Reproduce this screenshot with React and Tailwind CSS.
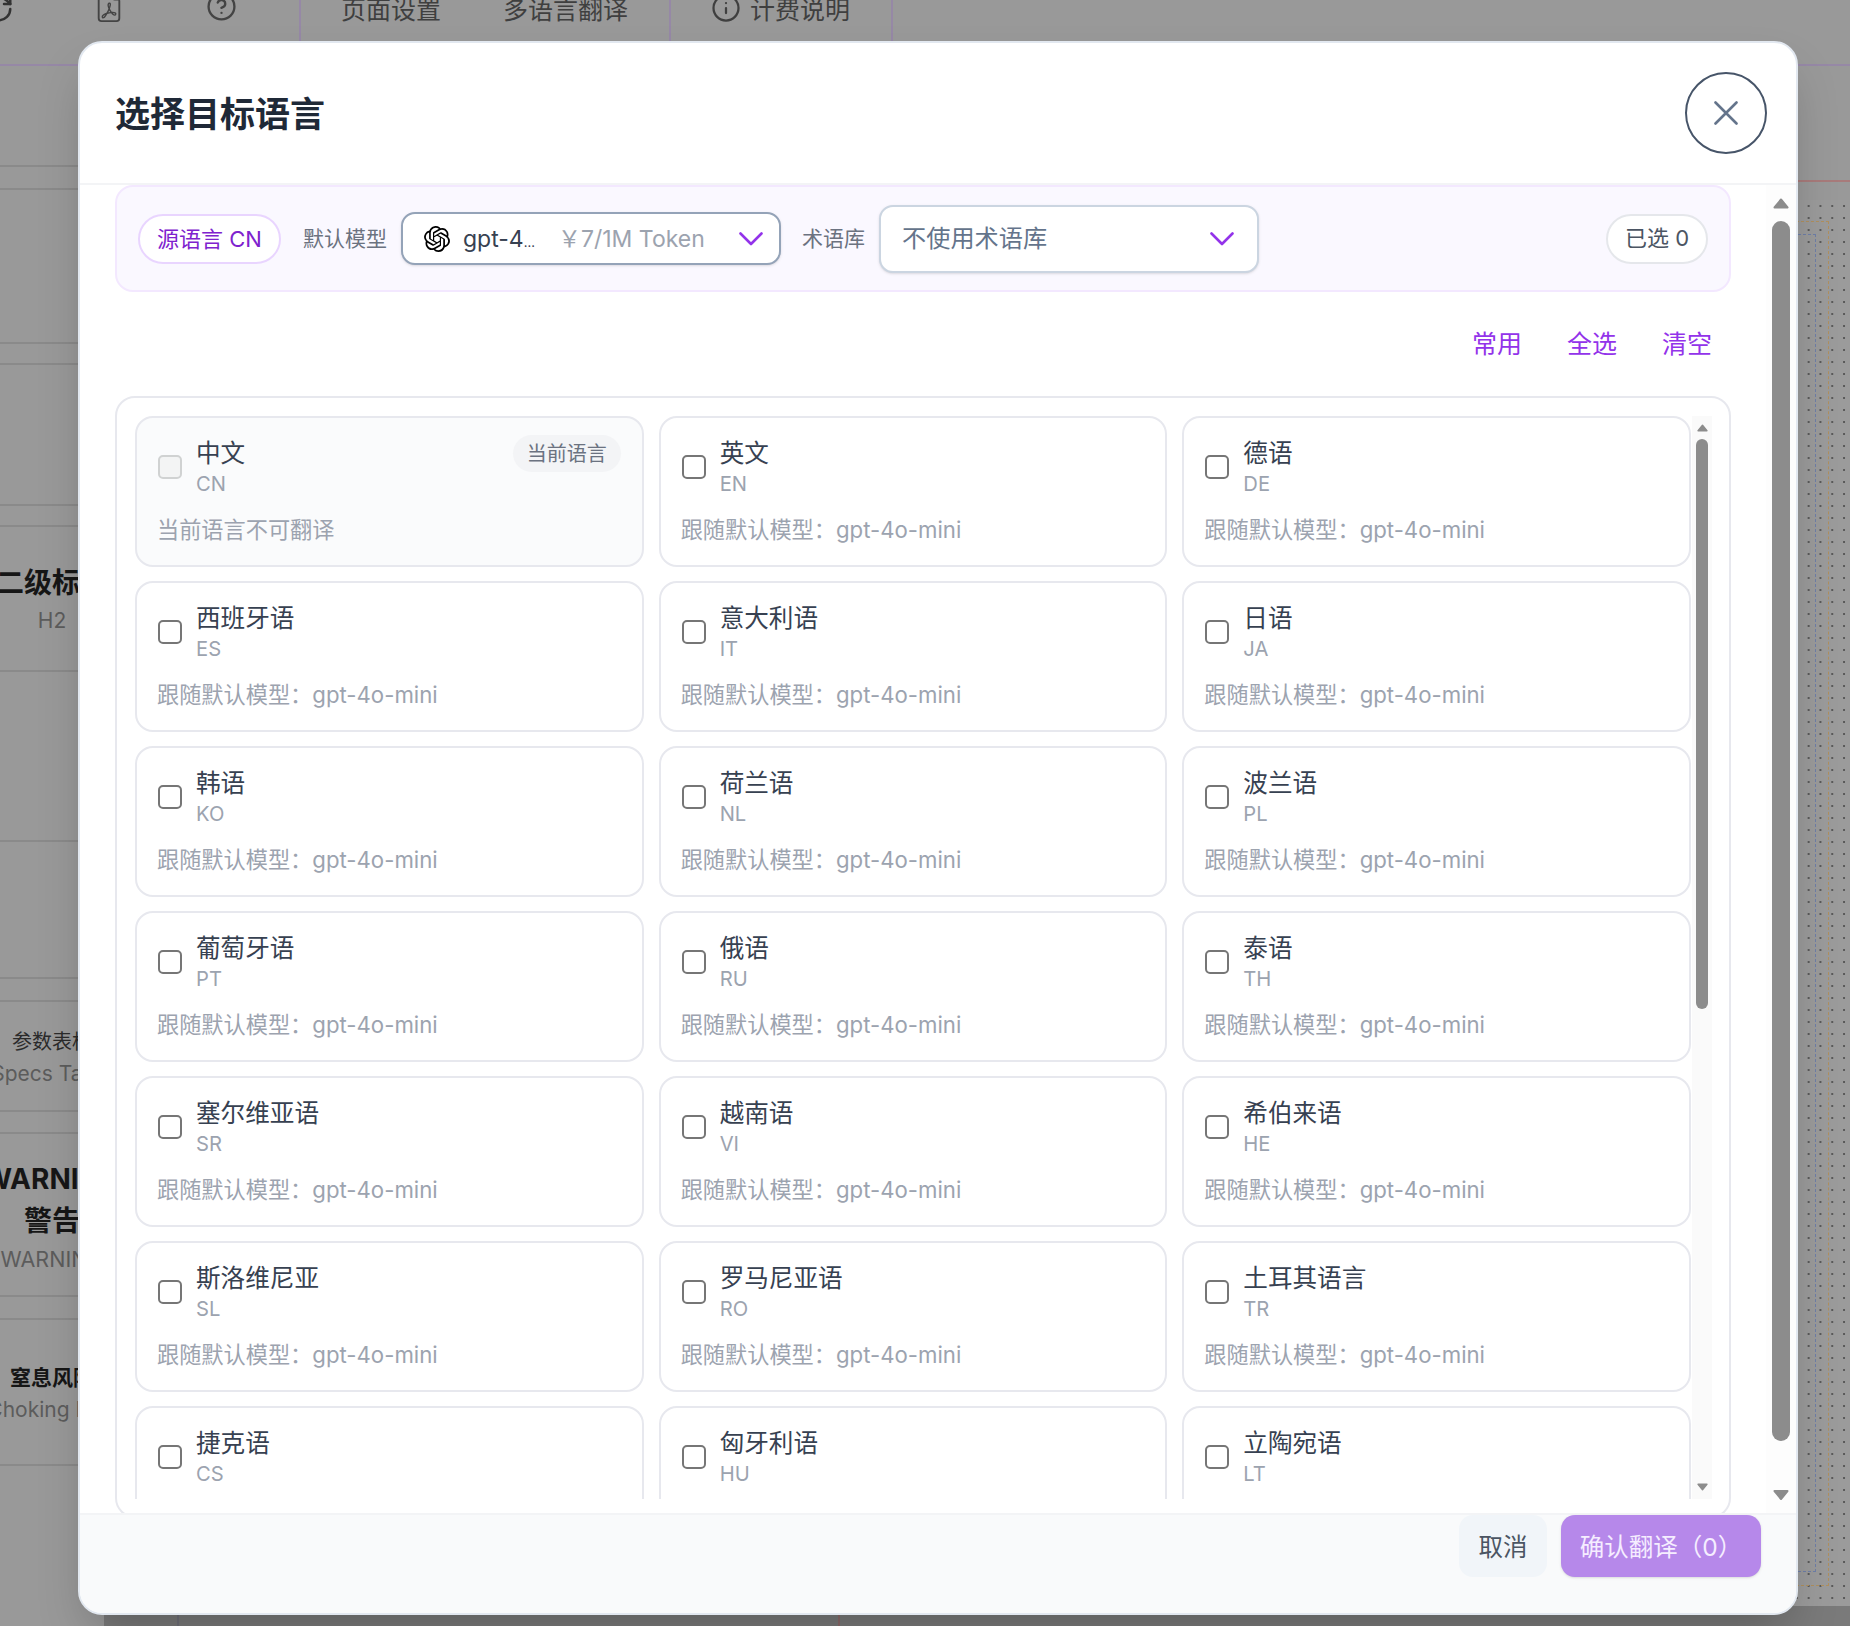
import { CircleHelp, Info, RotateCw } from "lucide-react"
import { BsFileEarmarkPdf } from "react-icons/bs"
import { SiOpenai } from "react-icons/si"

const LANGS = [
  ["英文", "EN"],
  ["德语", "DE"],
  ["西班牙语", "ES"],
  ["意大利语", "IT"],
  ["日语", "JA"],
  ["韩语", "KO"],
  ["荷兰语", "NL"],
  ["波兰语", "PL"],
  ["葡萄牙语", "PT"],
  ["俄语", "RU"],
  ["泰语", "TH"],
  ["塞尔维亚语", "SR"],
  ["越南语", "VI"],
  ["希伯来语", "HE"],
  ["斯洛维尼亚", "SL"],
  ["罗马尼亚语", "RO"],
  ["土耳其语言", "TR"],
  ["捷克语", "CS"],
  ["匈牙利语", "HU"],
  ["立陶宛语", "LT"],
]

function Chevron() {
  return (
    <svg viewBox="0 0 24 14" className="h-[14px] w-[24px] shrink-0 fill-none stroke-[#9333ea] stroke-[2.6]">
      <path d="M1.5 1.5 12 12 22.5 1.5" strokeLinecap="round" strokeLinejoin="round" />
    </svg>
  )
}

function Arrow({ down, className }) {
  return (
    <svg viewBox="0 0 16 11" className={`fill-[#8c8c8c] stroke-[#8c8c8c] stroke-2 ${className}`}>
      <path d={down ? "M1.5 1.5h13L8 9.5z" : "M8 1.5l6.5 8h-13z"} strokeLinejoin="round" />
    </svg>
  )
}

function LangCard({ name, code }) {
  return (
    <div className="h-[151px] rounded-[18px] border-2 border-[#e7e8ee] bg-white pl-[21px] pr-[21px] pt-[20px]">
      <div className="flex items-center gap-[14px]">
        <span className="h-[24px] w-[24px] rounded-[5px] border-2 border-[#767676] bg-white" />
        <div>
          <div className="text-[24.6px] leading-[30px] text-[#374151]">{name}</div>
          <div className="mt-[4px] text-[20.2px] leading-[24px] text-[#9ca3af]">{code}</div>
        </div>
      </div>
      <div className="-ml-[1px] mt-[21px] text-[22.2px] leading-[26px] text-[#9ca3af]">跟随默认模型：gpt-4o-mini</div>
    </div>
  )
}

function CurrentCard() {
  return (
    <div className="h-[151px] rounded-[18px] border-2 border-[#e7e8ee] bg-[#fafbfc] pl-[21px] pr-[21px] pt-[20px]">
      <div className="flex items-start justify-between">
        <div className="flex items-center gap-[14px]">
          <span className="h-[24px] w-[24px] rounded-[5px] border-2 border-[#d0d2d2] bg-[#f3f4f4]" />
          <div>
            <div className="text-[24.6px] leading-[30px] text-[#374151]">中文</div>
            <div className="mt-[4px] text-[20.2px] leading-[24px] text-[#9ca3af]">CN</div>
          </div>
        </div>
        <span className="-mt-[3px] flex h-[37px] w-[108px] items-center justify-center rounded-full bg-[#f3f4f6] text-[20px] text-[#6b7280]">
          当前语言
        </span>
      </div>
      <div className="-ml-[1px] mt-[21px] text-[22.2px] leading-[26px] text-[#9ca3af]">当前语言不可翻译</div>
    </div>
  )
}

// page behind the dialog, only its left column peeks out
const SIDE_ROWS = [
  { h: 101 },
  { h: 23 },
  { h: 154 },
  { h: 21 },
  { h: 141 },
  { h: 21 },
  { h: 145, title: "二级标题", sub: "H2", big: true },
  { h: 170 },
  { h: 137 },
  { h: 23 },
  { h: 110, title: "参数表格", sub: "Specs Table" },
  { h: 22 },
  { h: 163, warn: true },
  { h: 23 },
  { h: 146, title: "窒息风险", sub: "Choking Risk", strong: true },
]

function SideRow({ row }) {
  return (
    <div
      className="flex flex-col items-center justify-center border-b-2 border-[#8a8a8a] pt-[3px] whitespace-nowrap"
      style={{ height: row.h }}
    >
      {row.warn && <div className="text-[28px] leading-[42px] font-bold text-[#161616]">WARNING</div>}
      {row.warn && <div className="text-[28px] leading-[42px] font-bold text-[#161616]">警告</div>}
      {row.warn && <div className="mt-[2px] text-[21.5px] leading-[30px] text-[#5c5c5c]">WARNING</div>}
      {row.title && (
        <div
          className={
            row.big
              ? "text-[28px] leading-[40px] font-bold text-[#161616]"
              : row.strong
                ? "text-[21px] leading-[32px] font-bold text-[#161616]"
                : "text-[20px] leading-[32px] text-[#2b2b2b]"
          }
        >
          {row.title}
        </div>
      )}
      {row.sub && <div className={`text-[21px] leading-[32px] text-[#5c5c5c] ${row.big ? "mt-[2px]" : ""}`}>{row.sub}</div>}
    </div>
  )
}

function Backdrop() {
  return (
    <div className="absolute inset-0 overflow-hidden bg-[#999999]">
      <div className="flex h-[66px] border-b-2 border-[#9688a6] text-[25px] leading-[28px] text-[#3f3f3f]">
        <div className="flex w-[299px] items-start">
          <RotateCw size={30} strokeWidth={2} className="-ml-[16px] -mt-[6px] text-[#333333]" />
          <BsFileEarmarkPdf size={30} className="ml-[80px] -mt-[8px] text-[#444444]" />
          <CircleHelp size={31} strokeWidth={1.8} className="ml-[82px] -mt-[9px] text-[#444444]" />
        </div>
        <div className="flex w-[370px] items-start gap-[62px] border-l-2 border-[#9688a6] pl-[40px]">
          <span className="-mt-[4px]">页面设置</span>
          <span className="-mt-[4px]">多语言翻译</span>
        </div>
        <div className="flex w-[222px] items-start gap-[9px] border-l-2 border-[#9688a6] pl-[40px]">
          <Info size={30} strokeWidth={1.8} className="-mt-[7px]" />
          <span className="-mt-[4px]">计费说明</span>
        </div>
        <div className="border-l-2 border-[#9688a6]" />
      </div>
      <div className="flex h-[1560px]">
        <div className="w-[104px]">
          {SIDE_ROWS.map((row, i) => (
            <SideRow key={i} row={row} />
          ))}
        </div>
        <div className="flex flex-1 flex-col">
          <div className="h-[116px] border-b-2 border-[#a87b7b]" />
          <div className="h-[18px]" />
          <div className="flex-1 bg-[#9b9b9b] bg-[radial-gradient(#5a5a5a_0.8px,transparent_1px)] bg-[size:11.8px_12px] pb-[20px] pr-[21px] pt-[21px]">
            <div className="h-full border-b border-r border-t border-dashed border-[#b0905e] pb-[13px] pr-[12px] pt-[12px]">
              <div className="h-full border-b border-r border-t border-dashed border-[#6f7fa8]" />
            </div>
          </div>
          <div className="flex h-[20px] bg-[#7a7a7a] pl-[73px]">
            <div className="w-[663px] border-x-2 border-l-[#6f6f78] border-r-[#8a6a6a]" />
          </div>
        </div>
      </div>
    </div>
  )
}

export default function App() {
  return (
    <div className="relative h-[1626px] w-[1850px] overflow-hidden font-[Inter,'Noto_Sans_CJK_SC',sans-serif]">
      <Backdrop />

      <div className="absolute left-[78px] top-[41px] flex h-[1574px] w-[1720px] flex-col overflow-hidden rounded-[24px] border-2 border-[#e2e8f0] bg-white shadow-2xl">
        <div className="flex h-[142px] shrink-0 items-center justify-between border-b-2 border-[#f3f4f6] pl-[35px] pr-[29px]">
          <h1 className="pt-[2px] text-[35px] font-bold text-[#1f2937]">选择目标语言</h1>
          <button className="flex h-[82px] w-[82px] items-center justify-center rounded-full border-2 border-[#475569]">
            <svg viewBox="0 0 24 24" className="h-[24px] w-[24px] fill-none stroke-[#64748b] stroke-[2.6]">
              <path d="M1.5 1.5l21 21M22.5 1.5l-21 21" strokeLinecap="round" />
            </svg>
          </button>
        </div>

        <div className="flex min-h-0 flex-1 overflow-hidden">
          <div className="w-[1686px] shrink-0 pl-[35px] pr-[35px]">
            <div className="flex h-[107px] items-center rounded-[18px] border-2 border-[#f3e8ff] bg-[#faf8ff] pl-[21px] pr-[21px]">
              <span className="flex h-[50px] w-[143px] items-center justify-center rounded-full border-2 border-[#e9d5ff] bg-white pt-[1px] text-[22px] text-[#7e22ce]">
                源语言 CN
              </span>
              <span className="ml-[22px] pt-[1px] text-[21px] text-[#6b7280]">默认模型</span>
              <div className="ml-[14px] flex h-[53px] w-[380px] items-center rounded-[14px] border-2 border-[#94a3b8] bg-white pl-[21px] pr-[16px] shadow-sm">
                <SiOpenai size={26} className="shrink-0 text-black" />
                <span className="ml-[13px] pt-[2px] text-[23px] text-[#374151]">
                  gpt-4<span className="text-[13px]">…</span>
                </span>
                <span className="ml-[23px] pt-[2px] text-[23px] text-[#9ca3af]">￥7/1M Token</span>
                <span className="flex-1" />
                <Chevron />
              </div>
              <span className="ml-[21px] pt-[1px] text-[21px] text-[#6b7280]">术语库</span>
              <div className="ml-[14px] flex h-[68px] w-[380px] items-center justify-between rounded-[14px] border-2 border-[#cbd5e1] bg-white pl-[21px] pr-[23px] shadow-sm">
                <span className="pt-[2px] text-[24.2px] text-[#64748b]">不使用术语库</span>
                <Chevron />
              </div>
              <span className="flex-1" />
              <span className="flex h-[50px] w-[102px] items-center justify-center rounded-full border-2 border-[#e5e7eb] bg-white text-[22px] text-[#4b5563]">
                已选 0
              </span>
            </div>

            <div className="mt-[32px] flex h-[42px] items-center justify-end gap-[45px] pr-[19px] text-[25px] text-[#9333ea]">
              <span>常用</span>
              <span>全选</span>
              <span>清空</span>
            </div>

            <div className="mt-[30px] flex h-[1122px] items-stretch rounded-[20px] border-2 border-[#e7e8ee] pb-[17px] pl-[18px] pt-[18px]">
              <div className="grid h-full w-[1556px] grid-cols-3 content-start gap-x-[15px] gap-y-[14px] overflow-hidden">
                <CurrentCard />
                {LANGS.map(([name, code]) => (
                  <LangCard key={code} name={name} code={code} />
                ))}
              </div>
              <div className="ml-[1px] flex h-full w-[20px] shrink-0 flex-col items-center bg-[#fafafa] pt-[8px] pb-[8px]">
                <Arrow className="h-[8px] w-[11px]" />
                <div className="mt-[7px] h-[570px] w-[12px] rounded-full bg-[#8c8c8c]" />
                <span className="flex-1" />
                <Arrow down className="h-[8px] w-[11px]" />
              </div>
            </div>
          </div>

          <div className="ml-auto flex w-[30px] flex-col items-center bg-[#fdfdfd] pb-[12px] pt-[13px]">
            <Arrow className="h-[11px] w-[16px]" />
            <div className="mt-[12px] h-[1220px] w-[18px] rounded-full bg-[#8c8c8c]" />
            <span className="flex-1" />
            <Arrow down className="h-[12px] w-[16px]" />
          </div>
        </div>

        <div className="flex h-[100px] shrink-0 items-start justify-end gap-[14px] border-t-2 border-[#f3f4f6] bg-[#f9fafb] pr-[35px]">
          <button className="h-[62px] w-[88px] rounded-[14px] bg-[#f1f5f9] pt-[3px] text-[24.5px] text-[#4b5563]">取消</button>
          <button className="h-[62px] w-[200px] rounded-[14px] bg-[#b688ea] pt-[3px] text-[24.5px] text-[#f5edff] shadow-sm">
            确认翻译（0）
          </button>
        </div>
      </div>
    </div>
  )
}
